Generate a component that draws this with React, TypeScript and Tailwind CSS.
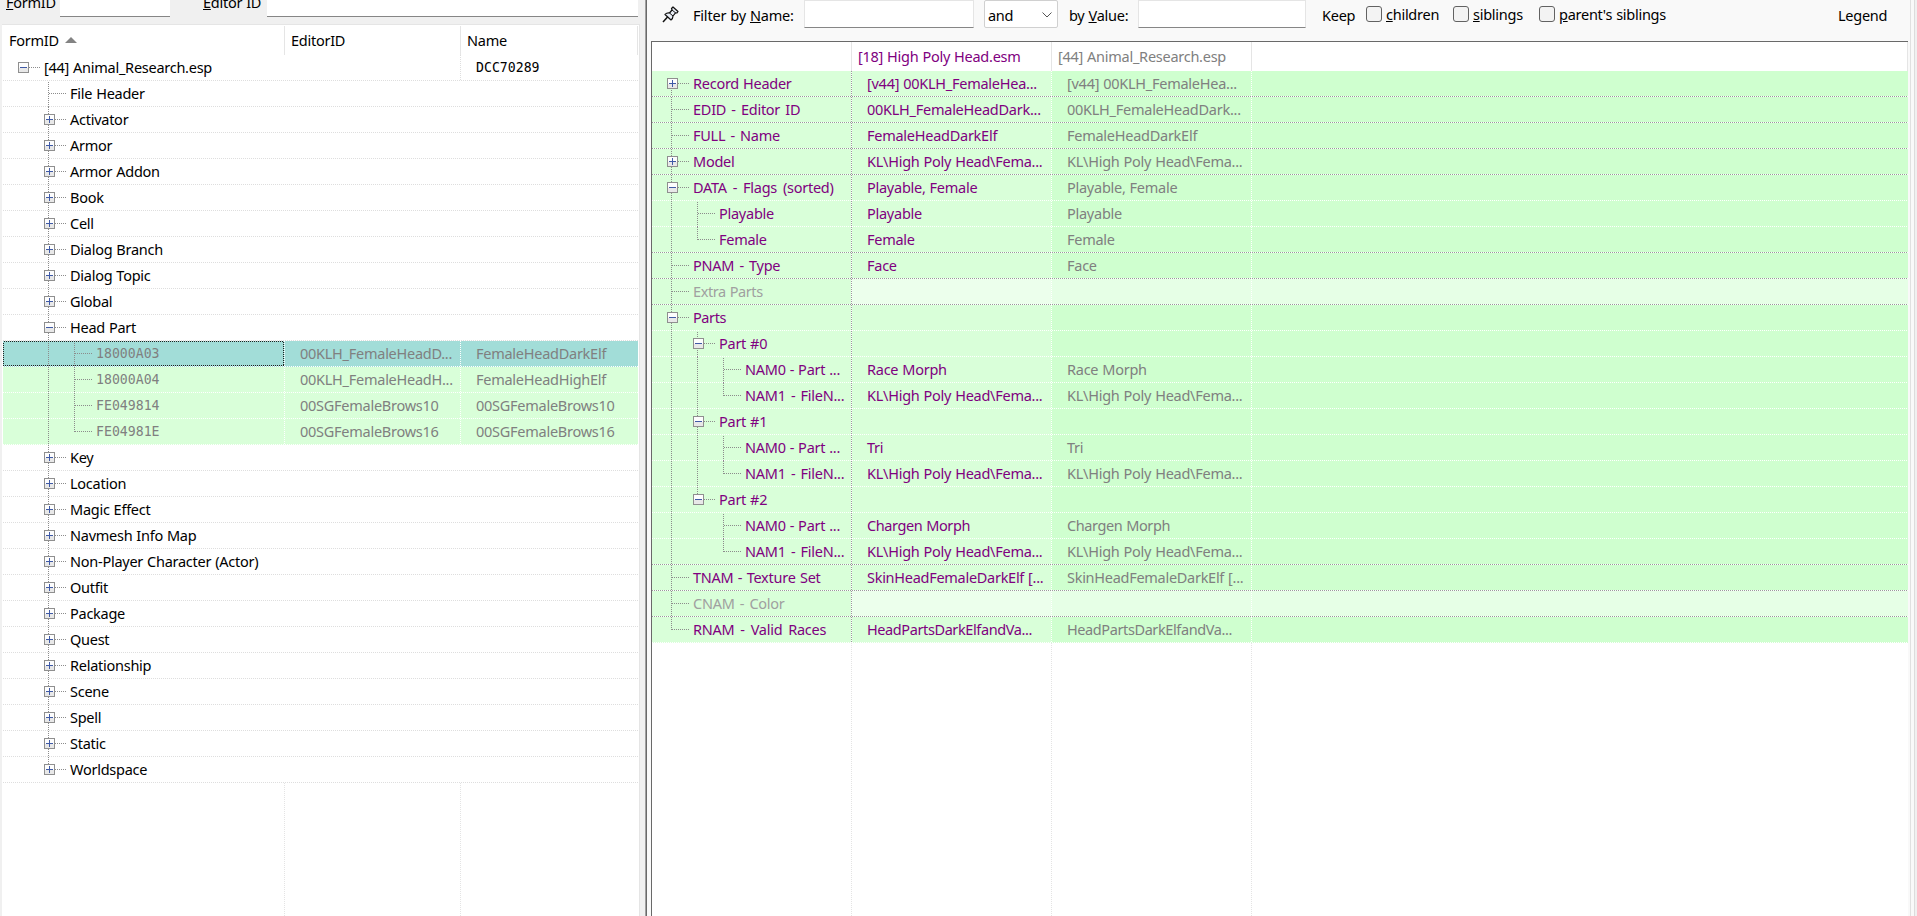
import React from "react";

type Guide = " " | "|" | "t" | "l" | "f";
type Box = "+" | "-" | "";

const DOT = "#8c8c8c";

function GuideCell({ guide, box, first }: { guide: Guide; box?: Box; first?: boolean }) {
  const top = first ? 1 : 0;
  const bottom = guide === "l" ? 13 : 26;
  const start = guide === "f" ? 13 : top;
  return (
    <svg width="26" height="26" viewBox="0 0 26 26" shapeRendering="crispEdges" className="block shrink-0 overflow-visible">
      {guide !== " " && (
        <path d={`M8.5 ${start}V${bottom}`} stroke={DOT} strokeDasharray="1 1" fill="none" />
      )}
      {box !== undefined && guide !== "|" && <path d="M9 12.5H26" stroke={DOT} strokeDasharray="1 1" fill="none" />}
      {box && (
        <>
          <rect x="4" y="7" width="11" height="11" fill="#8f8f8f" />
          <rect x="5" y="8" width="9" height="9" fill="#fdfdfd" />
          <rect x="5" y="13" width="9" height="4" fill="#e8e8e8" />
          <rect x="6" y="12" width="7" height="1" fill="#3f5aa6" />
          {box === "+" && <rect x="9" y="9" width="1" height="7" fill="#3f5aa6" />}
        </>
      )}
    </svg>
  );
}

function Guides({ g, box, first }: { g: string; box: Box; first?: boolean }) {
  return (
    <>
      {g.split("").map((c, i) => {
        const last = i === g.length - 1;
        return <GuideCell key={i} guide={c as Guide} box={last ? box : undefined} first={last && first} />;
      })}
    </>
  );
}

const HDots = ({ c }: { c: string }) => (
  <svg width="100%" height="1" className="block w-full shrink-0" shapeRendering="crispEdges">
    <path d="M0 .5H2000" stroke={c} strokeDasharray="1 1" />
  </svg>
);

const VDots = ({ c }: { c: string }) => (
  <svg width="1" height="100%" className="block h-full w-px shrink-0" shapeRendering="crispEdges">
    <path d="M.5 0V1000" stroke={c} strokeDasharray="1 1" />
  </svg>
);

const groupsTop = ["Activator", "Armor", "Armor Addon", "Book", "Cell", "Dialog Branch", "Dialog Topic", "Global"];
const groupsBottom = [
  "Key", "Location", "Magic Effect", "Navmesh Info Map", "Non-Player Character (Actor)", "Outfit", "Package",
  "Quest", "Relationship", "Scene", "Spell", "Static", "Worldspace",
];
const records = [
  ["18000A03", "00KLH_FemaleHeadD...", "FemaleHeadDarkElf"],
  ["18000A04", "00KLH_FemaleHeadH...", "FemaleHeadHighElf"],
  ["FE049814", "00SGFemaleBrows10", "00SGFemaleBrows10"],
  ["FE04981E", "00SGFemaleBrows16", "00SGFemaleBrows16"],
];

function GroupRow({ label, g, box, first }: { label: string; g: string; box: Box; first?: boolean }) {
  return (
    <div className="relative h-[26px] pl-[11px]">
      <div className="flex h-[26px] items-center">
        <Guides g={g} box={box} first={first} />
        <span className="pb-[2px] pl-1">{label}</span>
      </div>
      <div className="absolute inset-x-0 bottom-0">
        <HDots c="#dedede" />
      </div>
    </div>
  );
}

function RecordRow({ r, i }: { r: string[]; i: number }) {
  const fill = i === 0 ? "bg-[#a2ddd8]" : "bg-[#d9ffd9]";
  return (
    <div className={"relative flex h-[26px] text-[#808080] " + fill}>
      <div className="relative flex h-[26px] w-[281px] items-center pl-[11px]">
        <GuideCell guide=" " />
        <GuideCell guide="|" />
        <GuideCell guide={i === 3 ? "l" : "t"} box="" />
        <span className="pl-1 font-['DejaVu_Sans_Mono',monospace] text-[13.2px] tracking-[0px]">{r[0]}</span>
        {i === 0 && (
          <svg className="absolute top-0 left-0" width="281" height="25" shapeRendering="crispEdges">
            <rect x=".5" y=".5" width="280" height="24" fill="none" stroke="#202020" strokeDasharray="1 1" />
          </svg>
        )}
      </div>
      <VDots c="#ffffff" />
      <div className="flex w-[175px] items-center pb-[2px] pl-[15px]">{r[1]}</div>
      <VDots c="#ffffff" />
      <div className="flex flex-1 items-center pb-[2px] pl-[15px]">{r[2]}</div>
      <div className="absolute inset-x-0 bottom-0">
        <HDots c="#ffffff" />
      </div>
    </div>
  );
}

function LeftPanel() {
  return (
    <div className="flex w-[645px] shrink-0 flex-col bg-[#f0f0f0]">
      <div className="flex h-[24px] shrink-0 items-start">
        <div className="-mt-[8px] w-[54px] pl-[6px]"><u>F</u>ormID</div>
        <div className="ml-[6px] h-[17px] w-[110px] border-b border-[#868686] bg-white" />
        <div className="-mt-[8px] ml-[33px] w-[64px]"><u>E</u>ditor ID</div>
        <div className="h-[17px] w-[371px] border-b border-[#868686] bg-white" />
      </div>
      <div className="ml-[2px] flex w-[638px] flex-1 flex-col border-t border-r border-[#e5e5e5] bg-white pl-px">
        <div className="flex h-[30px] shrink-0">
          <div className="flex w-[281px] items-center pb-px pl-[6px]">
            FormID
            <svg width="12" height="6" viewBox="0 0 12 6" className="ml-[6px]"><path d="M6 0L12 6H0z" fill="#838383" /></svg>
          </div>
          <div className="mt-px flex w-[176px] items-center border-l border-[#e5e5e5] pb-[2px] pl-[6px]">EditorID</div>
          <div className="mt-px flex w-[178px] items-center border-x border-[#e5e5e5] pb-[2px] pl-[6px]">Name</div>
        </div>
        <div className="relative flex h-[26px] w-[635px] shrink-0">
          <div className="flex w-[457px] items-center pl-[11px]">
            <Guides g=" " box="-" />
            <span className="pb-[2px] pl-1">[44] Animal_Research.esp</span>
          </div>
          <VDots c="#dedede" />
          <div className="flex items-center pl-[15px] font-['DejaVu_Sans_Mono',monospace] text-[13.2px] tracking-[0px]">DCC70289</div>
          <div className="absolute inset-x-0 bottom-0"><HDots c="#dedede" /></div>
        </div>
        <div className="w-[635px] shrink-0">
          <GroupRow label="File Header" g=" t" box="" first />
          {groupsTop.map((l) => <GroupRow key={l} label={l} g=" t" box="+" />)}
          <GroupRow label="Head Part" g=" t" box="-" />
          {records.map((r, i) => <RecordRow key={r[0]} r={r} i={i} />)}
          {groupsBottom.map((l, i) => (
            <GroupRow key={l} label={l} g={i === groupsBottom.length - 1 ? " l" : " t"} box="+" />
          ))}
        </div>
        <div className="flex flex-1 overflow-hidden">
          <div className="w-[281px]" />
          <VDots c="#e4e4e4" />
          <div className="w-[175px]" />
          <VDots c="#e4e4e4" />
        </div>
      </div>
    </div>
  );
}

type Row = { g: string; box: Box; label: string; v?: string; ls?: string; vs?: string; sep?: boolean; dim?: boolean; first?: boolean };

const WIDE = "[word-spacing:2.4px]";
const WIDER = "[word-spacing:3.4px]";
const SNUG = "tracking-[-0.4px]";

const rows: Row[] = [
  { g: "f", box: "+", label: "Record Header", v: "[v44] 00KLH_FemaleHea...", sep: true },
  { g: "t", box: "", label: "EDID - Editor ID", ls: "[word-spacing:1.7px]", v: "00KLH_FemaleHeadDark...", sep: true },
  { g: "t", box: "", label: "FULL - Name", ls: "[word-spacing:1.7px]", v: "FemaleHeadDarkElf", sep: true },
  { g: "t", box: "+", label: "Model", v: "KL\\High Poly Head\\Fema...", sep: true },
  { g: "t", box: "-", label: "DATA - Flags (sorted)", ls: WIDE, v: "Playable, Female" },
  { g: "|t", box: "", label: "Playable", v: "Playable", first: true },
  { g: "|l", box: "", label: "Female", v: "Female", sep: true },
  { g: "t", box: "", label: "PNAM - Type", ls: "[word-spacing:1.7px]", v: "Face", sep: true },
  { g: "t", box: "", label: "Extra Parts", ls: SNUG, dim: true, sep: true },
  { g: "t", box: "-", label: "Parts", ls: SNUG },
  { g: "|t", box: "-", label: "Part #0", first: true },
  { g: "||t", box: "", label: "NAM0 - Part ...", v: "Race Morph", first: true },
  { g: "||l", box: "", label: "NAM1 - FileN...", ls: "[word-spacing:1.7px]", v: "KL\\High Poly Head\\Fema..." },
  { g: "|t", box: "-", label: "Part #1" },
  { g: "||t", box: "", label: "NAM0 - Part ...", v: "Tri", first: true },
  { g: "||l", box: "", label: "NAM1 - FileN...", ls: "[word-spacing:1.7px]", v: "KL\\High Poly Head\\Fema..." },
  { g: "|l", box: "-", label: "Part #2" },
  { g: "| t", box: "", label: "NAM0 - Part ...", v: "Chargen Morph", vs: SNUG, first: true },
  { g: "| l", box: "", label: "NAM1 - FileN...", ls: "[word-spacing:1.7px]", v: "KL\\High Poly Head\\Fema...", sep: true },
  { g: "t", box: "", label: "TNAM - Texture Set", ls: "[word-spacing:0.9px]", v: "SkinHeadFemaleDarkElf [...", vs: "tracking-[-0.28px]", sep: true },
  { g: "t", box: "", label: "CNAM - Color", ls: "[word-spacing:1.7px]", dim: true, sep: true },
  { g: "l", box: "", label: "RNAM - Valid Races", ls: WIDE, v: "HeadPartsDarkElfandVa...", vs: SNUG },
];

function DetailRow({ r }: { r: Row }) {
  const value = "flex items-center pb-[2px] pl-[15px] " + (r.vs ?? "");
  return (
    <div className="relative flex h-[26px] text-[#800080]">
      <div className={"flex w-[199px] items-center bg-[#d9ffd9] pl-[11px] " + (r.dim ? "text-[#a0a0a0]" : "")}>
        <Guides g={r.g} box={r.box} first={r.first} />
        <span className={"pb-[2px] pl-1 " + (r.ls ?? "")}>{r.label}</span>
      </div>
      <div className={"flex w-[200px] " + (r.dim ? "bg-[#ecffec]" : "bg-[#d9ffd9]")}>
        <div className="bg-white"><VDots c="#9a9a9a" /></div>
        <span className={value}>{r.v}</span>
      </div>
      <div className={"flex w-[200px] text-[#808080] " + (r.dim ? "bg-[#e6ffe6]" : "bg-[#cfffcf]")}>
        <VDots c="#ffffff" />
        <span className={value}>{r.v}</span>
      </div>
      <div className={"flex flex-1 " + (r.dim ? "bg-[#e6ffe6]" : "bg-[#cfffcf]")}>
        <VDots c="#ffffff" />
      </div>
      <div className={"absolute inset-x-0 bottom-0 " + (r.sep ? "bg-white" : "")}>
        <HDots c={r.sep ? "#9a9a9a" : "#ffffff"} />
      </div>
    </div>
  );
}

const Check = ({ k, rest, cls }: { k: string; rest: string; cls: string }) => (
  <div className={"flex items-start " + cls}>
    <span className="mt-[6px] h-4 w-4 rounded-[3px] border border-[#626262] bg-[#f3f3f3]" />
    <span className="mt-[4px] ml-1 whitespace-nowrap"><u>{k}</u>{rest}</span>
  </div>
);

function Toolbar() {
  return (
    <div className="flex h-[41px] shrink-0 items-start">
      <svg width="17" height="17" viewBox="0 0 17 17" className="mt-[6px] ml-[15px] shrink-0">
        <path d="M6 10.500L1 16" stroke="#111" strokeWidth="1.500" />
        <path d="M9.500 2.500L11 1L16 5.500L15 7L13.500 6.800L11 10Q11 12.500 9 14L3 8.500Q5 6.500 7.500 7L10 4z" fill="#e9eef6" stroke="#111" strokeWidth="1.200" strokeLinejoin="round" />
        <path d="M10 4L13.500 6.800M7.500 7L11 10" stroke="#111" strokeWidth="1" />
      </svg>
      <span className="mt-[5px] ml-[14px] w-[111px] tracking-[-0.2px] whitespace-nowrap">Filter by <u>N</u>ame:</span>
      <div className="h-[28px] w-[170px] border border-[#e5e5e5] border-b-[#868686] bg-white" />
      <div className="ml-[10px] flex h-[28px] w-[74px] items-start justify-between rounded-[2px] border border-[#d0d0d0] bg-white pt-[4px] pr-[5px] pl-[3px]">
        and
        <svg width="10" height="6" viewBox="0 0 10 6" className="mt-[7px]" fill="none" stroke="#555"><path d="M.5.5L5 5L9.500.5" /></svg>
      </div>
      <span className="mt-[5px] ml-[11px] w-[69px] whitespace-nowrap">by <u>V</u>alue:</span>
      <div className="h-[28px] w-[168px] border border-[#e5e5e5] border-b-[#868686] bg-white" />
      <span className="mt-[5px] ml-[16px] w-[44px]">Keep</span>
      <Check k="c" rest="hildren" cls="w-[87px]" />
      <Check k="s" rest="iblings" cls="w-[86px]" />
      <Check k="p" rest="arent's siblings" cls="w-[292px]" />
      <span className="mt-[5px] ml-[7px]">Legend</span>
    </div>
  );
}

export default function App() {
  return (
    <div className="flex h-[916px] w-[1917px] overflow-hidden bg-[#f9f9f9] font-['Noto_Sans',sans-serif] text-[14.5px] leading-[20px] tracking-[-0.26px] whitespace-pre text-black [word-spacing:0.5px]">
      <LeftPanel />
      <div className="w-px shrink-0 bg-[#a0a0a0]" />
      <div className="w-px shrink-0 bg-[#696969]" />
      <div className="flex w-[1262px] shrink-0 flex-col">
        <Toolbar />
        <div className="ml-[4px] flex w-[1257px] flex-1 flex-col border-t border-l border-[#696969] bg-white">
          <div className="flex h-[29px] shrink-0 border-r border-[#e5e5e5]">
            <div className="w-[199px]" />
            <div className="flex w-[200px] items-center border-l border-[#e5e5e5] pb-px pl-[6px] text-[#800080]">[18] High Poly Head.esm</div>
            <div className="flex w-[200px] items-center border-l border-[#e5e5e5] pb-px pl-[6px] text-[#808080]">[44] Animal_Research.esp</div>
            <div className="border-l border-[#e5e5e5]" />
          </div>
          <div className="shrink-0">{rows.map((r, i) => <DetailRow key={i} r={r} />)}</div>
          <div className="flex flex-1 overflow-hidden">
            <div className="w-[199px]" />
            <VDots c="#e4e4e4" />
            <div className="w-[199px]" />
            <VDots c="#e4e4e4" />
            <div className="w-[199px]" />
            <VDots c="#e4e4e4" />
          </div>
        </div>
      </div>
      <div className="flex flex-1 bg-[#f9f9f9]">
        <div className="ml-px w-px bg-[#e0e0e0]" />
        <div className="ml-[3px] flex-1 border-l border-[#dcdcdc] bg-[#f0f0f0]" />
      </div>
    </div>
  );
}
